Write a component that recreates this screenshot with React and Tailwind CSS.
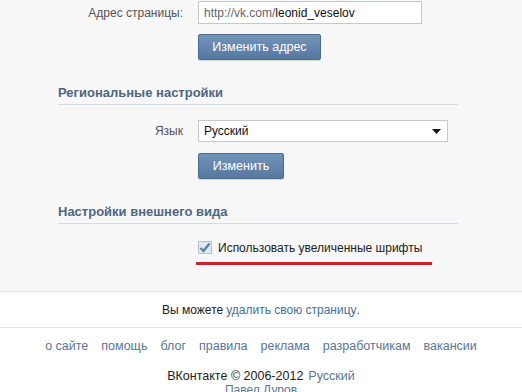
import React from "react";

function BlueButton({ children, className = "" }) {
  return (
    <button
      className={`h-[26px] rounded-[2px] border border-[#4d6d94] bg-gradient-to-b from-[#7394ba] to-[#56789f] text-[12.5px] leading-[16px] text-white shadow-[0_1px_1px_rgba(0,0,0,0.15)] ${className}`}
    >
      {children}
    </button>
  );
}

function SectionTitle({ children }) {
  return (
    <div className="ml-[58px] w-[400px] border-b border-[#d5dce4] pb-[3px] text-[13px] leading-[16px] font-bold text-[#4d6781]">
      {children}
    </div>
  );
}

export default function App() {
  const links = [
    "о сайте",
    "помощь",
    "блог",
    "правила",
    "реклама",
    "разработчикам",
    "вакансии",
  ];

  return (
    <div
      className="w-[522px] h-[392px] overflow-hidden bg-white text-[12px] leading-[16px] text-[#222]"
      style={{ fontFamily: '"Liberation Sans", Arial, sans-serif' }}
    >
      <div className="h-[292px] bg-[#f7f7f7] border-b border-[#e2e2e2] pt-[1px]">
        {/* address */}
        <div className="flex items-center h-[23px]">
          <div className="w-[183px] text-right text-[#555]">Адрес страницы:</div>
          <div className="ml-[15px] w-[224px] h-[23px] border border-[#c4c9ce] bg-white flex items-center px-[5px]">
            <span className="text-[#666]">http://vk.com/</span>
            <span className="text-[#111]">leonid_veselov</span>
          </div>
        </div>
        <div className="ml-[198px] mt-[10px] flex">
          <BlueButton className="w-[123px]">Изменить адрес</BlueButton>
        </div>

        {/* regional */}
        <div className="mt-[25px]">
          <SectionTitle>Региональные настройки</SectionTitle>
        </div>
        <div className="flex items-center h-[22px] mt-[15px]">
          <div className="w-[183px] text-right text-[#555]">Язык</div>
          <div className="ml-[15px] w-[250px] h-[22px] border border-[#c4c9ce] bg-white flex items-center justify-between pl-[5px] pr-[6px]">
            <span className="text-[#111]">Русский</span>
            <svg width="9" height="5" viewBox="0 0 9 5">
              <path d="M0 0h9L4.5 5z" fill="#111" />
            </svg>
          </div>
        </div>
        <div className="ml-[198px] mt-[11px] flex">
          <BlueButton className="w-[86px]">Изменить</BlueButton>
        </div>

        {/* appearance */}
        <div className="mt-[25px]">
          <SectionTitle>Настройки внешнего вида</SectionTitle>
        </div>
        <div className="ml-[198px] mt-[17px] flex items-center h-[13px]">
          <div className="w-[14px] h-[13px] border border-[#b3c0ce] bg-[#e2e9f1] flex items-center justify-center">
            <svg width="12" height="11" viewBox="0 0 12 11">
              <path
                d="M1.5 6 L4.5 9 L10.5 1.5"
                fill="none"
                stroke="#5d7fa5"
                strokeWidth="2.4"
              />
            </svg>
          </div>
          <span className="ml-[6px] text-[#222]">Использовать увеличенные шрифты</span>
        </div>
        <div className="ml-[196px] mt-[8px] w-[236px] h-[3px] bg-[#d4202a]" />
      </div>

      {/* footer */}
      <div className="h-[36px] border-b border-[#e4e4e4] flex items-center justify-center">
        <span className="text-[#222]">Вы можете</span>
        <span className="ml-[3px] text-[#4a6f94]">удалить свою страницу</span>
        <span className="text-[#555]">.</span>
      </div>
      <div className="flex justify-center gap-[13px] mt-[10px] text-[12.5px] text-[#5a7595]">
        {links.map((l) => (
          <span key={l}>{l}</span>
        ))}
      </div>
      <div className="flex justify-center mt-[15px] text-[12.5px] leading-[14px]">
        <span className="text-[#222]">ВКонтакте © 2006-2012</span>
        <span className="ml-[5px] text-[#5a7595]">Русский</span>
      </div>
      <div className="text-center text-[12px] leading-[14px] text-[#5a7595]">Павел Дуров</div>
    </div>
  );
}
